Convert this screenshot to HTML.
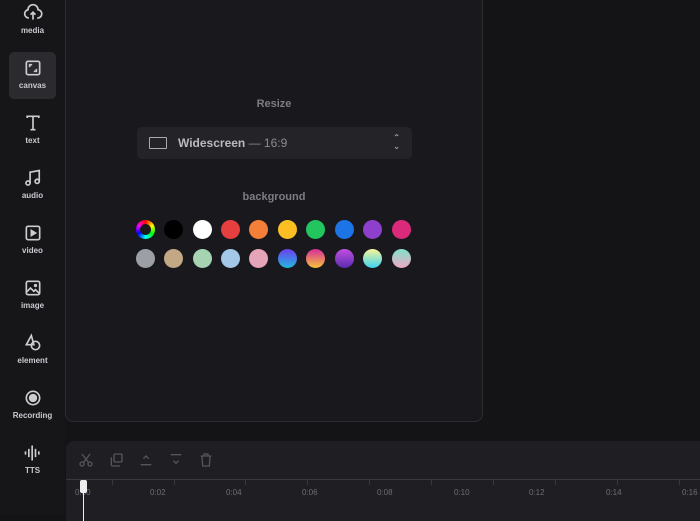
<!DOCTYPE html>
<html><head><style>
*{margin:0;padding:0;box-sizing:border-box}
body{width:700px;height:514px;background:#141417;font-family:"Liberation Sans",sans-serif;position:relative;overflow:hidden}
.side{position:absolute;left:0;top:0;width:65px;height:514px;background:#161619}
.item{position:absolute;left:9px;width:47px;height:47px;text-align:center;color:#c9c9d0;font-size:8px;font-weight:bold}
.item svg{position:absolute;left:14px;top:6px}
.item span{position:absolute;left:0;right:0;top:29px}
.active{background:#2a2a2f;border-radius:5px}
.panel{position:absolute;left:65px;top:-10px;width:418px;height:432px;border:1px solid #2c2c31;border-radius:8px;background:#19191d}
.t{position:absolute;color:#7c7c84;font-size:11px;font-weight:bold;width:100%;text-align:center;left:0}
.dd{position:absolute;left:137px;top:127px;width:275px;height:32px;background:#242428;border-radius:5px;color:#b9b9c0;font-size:12px;font-weight:bold}
.sw{position:absolute;width:19px;height:19px;border-radius:50%}
.tl{position:absolute;left:66px;top:441px;width:640px;height:80px;background:#1f1f23;border-radius:8px 0 0 0}
.rl{position:absolute;left:0;right:0;top:38px;height:1px;background:#38383d}
.tick{position:absolute;top:38px;width:1px;height:6px;background:#38383d}
.lb{position:absolute;top:47px;font-size:8px;color:#6c6c73}
</style></head><body>
<div class="side">
 <div class="item" style="top:-3px"><svg width="20" height="20" viewBox="0 0 24 24" fill="none" stroke="#ccc" stroke-width="2"><path d="M7 18a5 5 0 0 1-1-9.9A6 6 0 0 1 18 8a4.5 4.5 0 0 1-1 10"/><path d="M12 20v-8M9 14l3-3 3 3"/></svg><span>media</span></div>
 <div class="item active" style="top:52px"><svg width="20" height="20" viewBox="0 0 24 24" fill="none" stroke="#ccc" stroke-width="2"><rect x="4" y="4" width="16" height="16" rx="2"/><path d="M8 11V8h3M16 13v3h-3"/></svg><span>canvas</span></div>
 <div class="item" style="top:107px"><svg width="20" height="20" viewBox="0 0 24 24" fill="none" stroke="#ccc" stroke-width="2"><path d="M5 6V4h14v2M12 4v16M9 20h6"/></svg><span>text</span></div>
 <div class="item" style="top:162px"><svg width="20" height="20" viewBox="0 0 24 24" fill="none" stroke="#ccc" stroke-width="2"><circle cx="6" cy="18" r="2.5"/><circle cx="17" cy="16" r="2.5"/><path d="M8.5 18V5l11-2v13"/></svg><span>audio</span></div>
 <div class="item" style="top:217px"><svg width="20" height="20" viewBox="0 0 24 24" fill="none" stroke="#ccc" stroke-width="2"><rect x="4" y="4" width="16" height="16" rx="2"/><path d="M10 9l5 3-5 3z" fill="#ccc"/></svg><span>video</span></div>
 <div class="item" style="top:272px"><svg width="20" height="20" viewBox="0 0 24 24" fill="none" stroke="#ccc" stroke-width="2"><rect x="4" y="4" width="16" height="16" rx="2"/><path d="M4 17l5-5 4 4 2-2 5 5"/><circle cx="15" cy="9" r="1"/></svg><span>image</span></div>
 <div class="item" style="top:327px"><svg width="20" height="20" viewBox="0 0 24 24" fill="none" stroke="#ccc" stroke-width="2"><path d="M10 3L4 14h9z"/><circle cx="15" cy="15" r="5"/></svg><span>element</span></div>
 <div class="item" style="top:382px"><svg width="20" height="20" viewBox="0 0 24 24" fill="none" stroke="#ccc" stroke-width="2"><circle cx="12" cy="12" r="8"/><circle cx="12" cy="12" r="4" fill="#ccc"/></svg><span>Recording</span></div>
 <div class="item" style="top:437px"><svg width="20" height="20" viewBox="0 0 24 24" fill="none" stroke="#ccc" stroke-width="2"><path d="M3 10v4M7 7v10M11 3v18M15 7v10M19 10v4"/></svg><span>TTS</span></div>
</div>
<div class="panel">
 <div class="t" style="top:107px">Resize</div>
 <div class="t" style="top:200px">background</div>
</div>
<div class="dd"><div style="position:absolute;left:12px;top:10px;width:18px;height:12px;border:1.5px solid #aaa;border-radius:1px"></div><div style="position:absolute;left:41px;top:9px">Widescreen <span style="color:#8a8a92;font-weight:normal">— 16:9</span></div><div style="position:absolute;right:12px;top:6px;color:#999;font-size:8px;line-height:9px">⌃<br>⌄</div></div>
<div class="sw" style="left:136px;top:220px;background:conic-gradient(red,yellow,lime,cyan,blue,magenta,red)"><div style="position:absolute;left:4px;top:4px;width:11px;height:11px;border-radius:50%;background:#19191d"></div></div>
<div class="sw" style="left:164px;top:220px;background:#000"></div>
<div class="sw" style="left:193px;top:220px;background:#fff"></div>
<div class="sw" style="left:221px;top:220px;background:#e5403f"></div>
<div class="sw" style="left:249px;top:220px;background:#f47f38"></div>
<div class="sw" style="left:278px;top:220px;background:#fbbf24"></div>
<div class="sw" style="left:306px;top:220px;background:#22c55e"></div>
<div class="sw" style="left:335px;top:220px;background:#1d74e7"></div>
<div class="sw" style="left:363px;top:220px;background:#8e3fcb"></div>
<div class="sw" style="left:392px;top:220px;background:#db2a79"></div>
<div class="sw" style="left:136px;top:249px;background:#9ca0a6"></div>
<div class="sw" style="left:164px;top:249px;background:#c3a886"></div>
<div class="sw" style="left:193px;top:249px;background:#a6d4b2"></div>
<div class="sw" style="left:221px;top:249px;background:#a3c8e8"></div>
<div class="sw" style="left:249px;top:249px;background:#e6a4b8"></div>
<div class="sw" style="left:278px;top:249px;background:linear-gradient(#6d3ef0,#22b8e0)"></div>
<div class="sw" style="left:306px;top:249px;background:linear-gradient(#d62d9b,#f8c33a)"></div>
<div class="sw" style="left:335px;top:249px;background:linear-gradient(#c34fe0,#5a2bb0)"></div>
<div class="sw" style="left:363px;top:249px;background:linear-gradient(#f8f49a,#3dd4f0)"></div>
<div class="sw" style="left:392px;top:249px;background:linear-gradient(#7fe0c8,#f0a8c8)"></div>
<div class="tl">
 <svg style="position:absolute;left:12px;top:11px" width="16" height="16" viewBox="0 0 24 24" fill="none" stroke="#55555b" stroke-width="2"><circle cx="6" cy="18" r="3"/><circle cx="18" cy="18" r="3"/><path d="M8 16L18 3M16 16L6 3"/></svg>
 <svg style="position:absolute;left:42px;top:11px" width="16" height="16" viewBox="0 0 24 24" fill="none" stroke="#55555b" stroke-width="2"><rect x="9" y="3" width="12" height="12" rx="2"/><path d="M5 8v11a2 2 0 0 0 2 2h11"/></svg>
 <svg style="position:absolute;left:72px;top:11px" width="16" height="16" viewBox="0 0 24 24" fill="none" stroke="#55555b" stroke-width="2"><path d="M8 10l4-4 4 4M4 19h16"/></svg>
 <svg style="position:absolute;left:102px;top:11px" width="16" height="16" viewBox="0 0 24 24" fill="none" stroke="#55555b" stroke-width="2"><path d="M4 4h16M8 13l4 4 4-4"/></svg>
 <svg style="position:absolute;left:132px;top:11px" width="16" height="16" viewBox="0 0 24 24" fill="none" stroke="#55555b" stroke-width="2"><path d="M4 6h16M9 6V3h6v3M6 6l1 15h10l1-15"/></svg>
 <div class="rl"></div>
 <div class="tick" style="left:46px"></div><div class="tick" style="left:108px"></div><div class="tick" style="left:179px"></div><div class="tick" style="left:241px"></div><div class="tick" style="left:303px"></div><div class="tick" style="left:365px"></div><div class="tick" style="left:427px"></div><div class="tick" style="left:489px"></div><div class="tick" style="left:551px"></div><div class="tick" style="left:613px"></div>
 <div class="lb" style="left:9px">0:00</div><div class="lb" style="left:84px">0:02</div><div class="lb" style="left:160px">0:04</div><div class="lb" style="left:236px">0:06</div><div class="lb" style="left:311px">0:08</div><div class="lb" style="left:388px">0:10</div><div class="lb" style="left:463px">0:12</div><div class="lb" style="left:540px">0:14</div><div class="lb" style="left:616px">0:16</div>
 <div style="position:absolute;left:14px;top:39px;width:7px;height:13px;background:#eee;border-radius:2px"></div>
 <div style="position:absolute;left:17px;top:50px;width:1px;height:30px;background:#eee"></div>
</div>
</body></html>
